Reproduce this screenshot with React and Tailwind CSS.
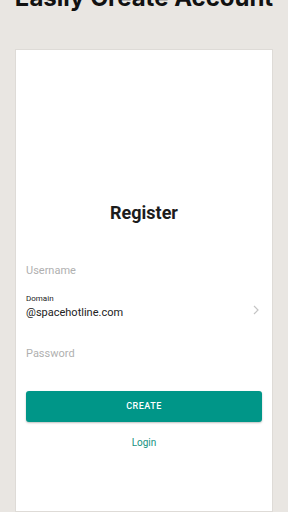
export default function App() {
  return (
    <div className="flex h-[512px] w-[288px] flex-col overflow-hidden bg-[#e9e6e2] font-['Roboto',sans-serif]">
      <h1 className="mt-[-17px] text-center font-['Inter',sans-serif] text-[24px] font-bold leading-[30px] text-[#111]">
        Easily Create Account
      </h1>

      <div className="mx-[15px] mt-[36px] flex flex-1 flex-col border border-[#dedbd7] bg-white px-[10px]">
        <h2 className="mt-[152px] text-center text-[18px] font-bold leading-[22px] text-[#1c1c1c]">
          Register
        </h2>

        <div className="mt-[40px] text-[11px] leading-[14px] text-[#b0b0b0]">Username</div>

        <div className="mt-[16px] flex items-center justify-between">
          <div>
            <div className="text-[8px] leading-[10px] text-[#222]">Domain</div>
            <div className="mt-[2px] text-[11px] leading-[14px] text-[#222]">@spacehotline.com</div>
          </div>
          <svg width="8" height="10" viewBox="0 0 8 10" className="mr-[2px] mt-[6px]">
            <path d="M2 1 L6 5 L2 9" fill="none" stroke="#c4c4c4" strokeWidth="1.2" />
          </svg>
        </div>

        <div className="mt-[27px] text-[11px] leading-[14px] text-[#b0b0b0]">Password</div>

        <button className="mt-[30px] h-[31px] rounded-[3px] bg-[#009688] text-[9px] font-medium tracking-[0.5px] text-white shadow-[0_1px_2px_rgba(0,0,0,0.25)]">
          CREATE
        </button>

        <div className="mt-[15px] text-center text-[10px] leading-[12px] text-[#16927f]">Login</div>
      </div>
    </div>
  )
}
